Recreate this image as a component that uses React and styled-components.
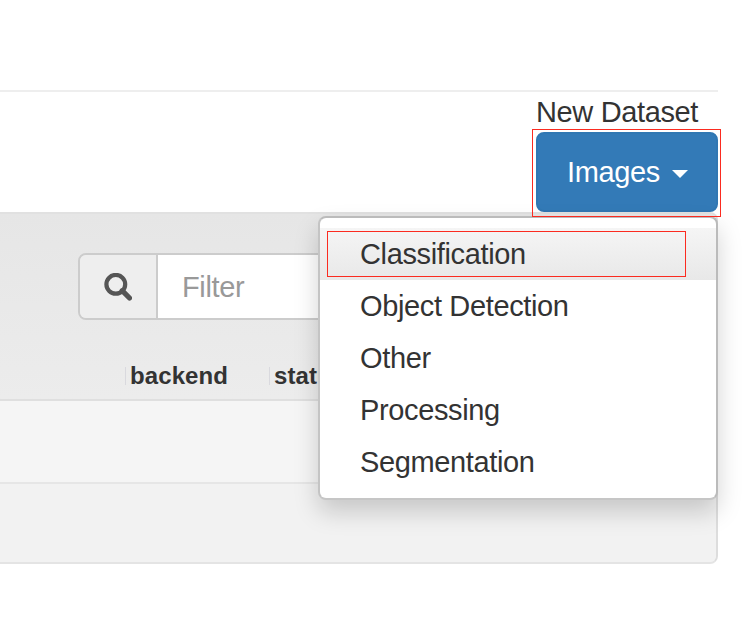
import React from "react";
import styled, { createGlobalStyle } from "styled-components";

const GlobalStyle = createGlobalStyle`
  * { box-sizing: border-box; }
  body {
    margin: 0;
    background: #fff;
    color: #333;
    font: 29px/40px "Liberation Sans", Arial, sans-serif;
    letter-spacing: -0.36px;
    overflow: hidden;
  }
`;

const Page = styled.main`
  width: 744px;
  height: 626px;
  padding: 90px 26px 0 0;
  overflow: hidden;
`;

const Header = styled.header`
  display: flex;
  justify-content: flex-end;
  height: 122px;
  border-top: 2px solid #eee;
`;

const Creator = styled.div`
  position: relative;
  width: 182px;
`;

const Label = styled.div`
  height: 40px;
  white-space: nowrap;
`;

const DropdownButton = styled.button`
  display: flex;
  align-items: center;
  gap: 12px;
  width: 182px;
  height: 80px;
  padding: 0 0 0 29px;
  border: 2px solid #3077b3;
  border-radius: 8px;
  background: #337ab7;
  color: #fff;
  font: inherit;
  letter-spacing: inherit;
`;

const Caret = styled.span`
  margin-top: 4px;
  border: 8px solid transparent;
  border-top-color: #fff;
  border-bottom: 0;
`;

const Menu = styled.ul`
  position: absolute;
  top: 124px;
  right: 0;
  z-index: 1;
  width: 400px;
  height: 284px;
  margin: 0;
  padding: 10px 0;
  list-style: none;
  border: 2px solid #bbb;
  border-left-color: #c4c4c4;
  border-bottom-color: #c6c6c6;
  border-radius: 8px;
  background: #fff;
  box-shadow: 0 12px 24px rgba(0, 0, 0, 0.175);
`;

const MenuItem = styled.li`
  height: 52px;
  padding: 0 40px;
  line-height: 52px;
  background: ${({ $active }) => ($active ? "linear-gradient(#f5f5f5, #e8e8e8)" : "none")};
`;

const Highlight = styled.span`
  position: absolute;
  z-index: 2;
  top: ${({ $top }) => $top}px;
  left: ${({ $left }) => $left}px;
  width: ${({ $width }) => $width}px;
  height: ${({ $height }) => $height}px;
  border: 1px solid #fb2b20;
  pointer-events: none;
`;

const Panel = styled.section`
  height: 352px;
  overflow: hidden;
  border: 2px solid #ddd;
  border-top-color: #e1e1e1;
  border-bottom-color: #e4e4e4;
  border-left: 0;
  border-radius: 0 8px 8px 0;
  background: #f2f2f2;
`;

const PanelHeading = styled.div`
  height: 187px;
  padding: 39px 0 0 78px;
  border-bottom: 2px solid #dfdfdf;
  background: linear-gradient(#e6e6e6, #ececec);
`;

const SearchGroup = styled.div`
  display: flex;
  width: 560px;
  height: 67px;
  border: 2px solid #ccc;
  border-radius: 8px;
  overflow: hidden;
`;

const SearchAddon = styled.span`
  display: flex;
  align-items: center;
  justify-content: center;
  width: 78px;
  border-right: 2px solid #ccc;
  background: #eee;
`;

const SearchInput = styled.input`
  flex: 1;
  min-width: 0;
  padding: 0 24px;
  border: 0;
  background: #fff;
  font: inherit;
  letter-spacing: inherit;
  &::placeholder { color: #999; opacity: 1; }
`;

const Columns = styled.div`
  display: grid;
  grid-template-columns: 144px 150px;
  margin: 41px 0 0 47px;
  font-size: 24px;
  font-weight: 700;
  letter-spacing: 0.1px;
  line-height: 30px;
`;

const Column = styled.span`
  display: flex;
  align-items: center;
  gap: 4px;
  &::before {
    content: "";
    width: 1px;
    height: 18px;
    background: #d9d9de;
  }
`;

const Row = styled.div`
  height: 83px;
  background: ${({ $alt }) => ($alt ? "#f2f2f2" : "#f5f5f5")};
  border-bottom: 2px solid ${({ $alt }) => ($alt ? "#f2f2f2" : "#e6e6e6")};
`;

const options = ["Classification", "Object Detection", "Other", "Processing", "Segmentation"];

export default function App() {
  return (
    <>
      <GlobalStyle />
      <Page>
        <Header>
          <Creator>
            <Label>New Dataset</Label>
            <DropdownButton>
              Images <Caret />
            </DropdownButton>
            <Menu>
              {options.map((option, index) => (
                <MenuItem key={option} $active={index === 0}>{option}</MenuItem>
              ))}
              <Highlight $top={13} $left={7} $width={359} $height={46} />
            </Menu>
            <Highlight $top={37} $left={-4} $width={189} $height={88} />
          </Creator>
        </Header>
        <Panel>
          <PanelHeading>
            <SearchGroup>
              <SearchAddon>
                <svg width="28" height="28" viewBox="0 0 28 28" fill="none" stroke="#555" aria-hidden="true">
                  <circle cx="11.8" cy="11.3" r="9.4" strokeWidth="4.2" />
                  <path d="M18.2 17.7 25.5 25" strokeWidth="5.2" strokeLinecap="round" />
                </svg>
              </SearchAddon>
              <SearchInput placeholder="Filter" />
            </SearchGroup>
            <Columns>
              <Column>backend</Column>
              <Column>status</Column>
            </Columns>
          </PanelHeading>
          <Row />
          <Row $alt />
        </Panel>
      </Page>
    </>
  );
}
